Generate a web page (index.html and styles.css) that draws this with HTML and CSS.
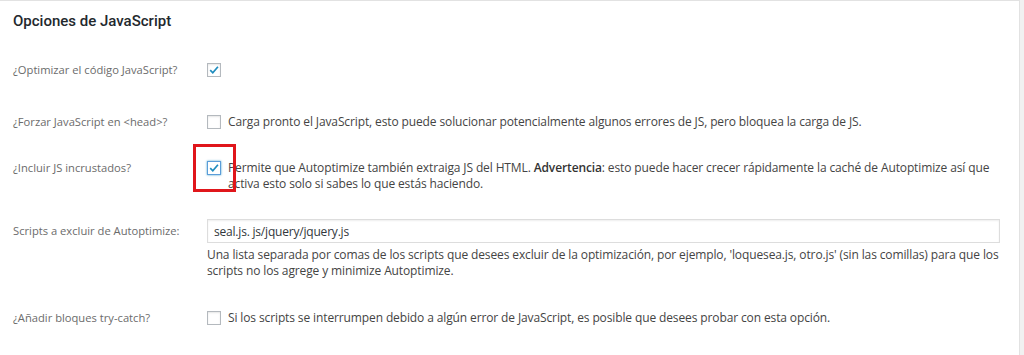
FILE: index.html
```html
<!DOCTYPE html>
<html lang="es">
<head>
    <meta charset="UTF-8">
    <title>Opciones de JavaScript</title>
    <link rel="stylesheet" href="styles.css">
</head>
<body>
    <div class="postbox">
        <h2 class="title">Opciones de JavaScript</h2>

        <div class="row row-optimize">
            <div class="label">¿Optimizar el código JavaScript?</div>
            <div class="field">
                <span class="check checked"><svg viewBox="0 0 14 14"><path d="M2.6 7.2 L5.6 10.2 L11.6 3.2" /></svg></span>
            </div>
        </div>

        <div class="row row-head">
            <div class="label">¿Forzar JavaScript en &lt;head&gt;?</div>
            <div class="field">
                <span class="check"></span>
                <span class="desc">Carga pronto el JavaScript, esto puede solucionar potencialmente algunos errores de JS, pero bloquea la carga de JS.</span>
            </div>
        </div>

        <div class="row row-inline">
            <div class="label">¿Incluir JS incrustados?</div>
            <div class="field">
                <span class="check checked focus"><svg viewBox="0 0 14 14"><path d="M2.6 7.2 L5.6 10.2 L11.6 3.2" /></svg></span>
                <span class="desc">Permite que Autoptimize también extraiga JS del HTML. <strong>Advertencia</strong>: esto puede hacer crecer rápidamente la caché de Autoptimize así que activa esto solo si sabes lo que estás haciendo.</span>
            </div>
            <div class="highlight"></div>
        </div>

        <div class="row row-exclude">
            <div class="label">Scripts a excluir de Autoptimize:</div>
            <div class="field column">
                <input class="text-input" type="text" value="seal.js. js/jquery/jquery.js">
                <span class="desc">Una lista separada por comas de los scripts que desees excluir de la optimización, por ejemplo, 'loquesea.js, otro.js' (sin las comillas) para que los scripts no los agrege y minimize Autoptimize.</span>
            </div>
        </div>

        <div class="row row-trycatch">
            <div class="label">¿Añadir bloques try-catch?</div>
            <div class="field">
                <span class="check"></span>
                <span class="desc">Si los scripts se interrumpen debido a algún error de JavaScript, es posible que desees probar con esta opción.</span>
            </div>
        </div>
    </div>
</body>
</html>
```

FILE: styles.css
```css
html, body {
    margin: 0;
    padding: 0;
    background-color: #f1f1f1;
    height: 355px;
    overflow: hidden;
}
body {
    font-family: "Open Sans", "Noto Sans", sans-serif;
    font-size: 12px;
    line-height: 16px;
    letter-spacing: -0.12px;
    color: #444;
}
.postbox {
    position: relative;
    width: 1020px;
    height: 355px;
    background-color: #fff;
    border-top: 1px solid #e2e2e2;
    border-right: 1px solid #e2e2e2;
    box-sizing: border-box;
}
.title {
    margin: 0;
    padding: 10px 13px 0;
    font-family: Roboto, "Open Sans", sans-serif;
    font-size: 15px;
    line-height: 20px;
    font-weight: 500;
    letter-spacing: 0;
    color: #23282d;
}
.row {
    display: grid;
    grid-template-columns: 194px 1fr;
    padding: 0 13px;
}
.row-optimize { margin-top: 31px; }
.row-head { margin-top: 36px; }
.row-inline { margin-top: 30px; }
.row-exclude { margin-top: 27px; }
.row-trycatch { margin-top: 31px; }
.label {
    font-size: 11.2px;
    letter-spacing: 0;
    color: #6b6b6b;
}
.row-exclude .label {
    padding-top: 4px;
}
.field {
    display: flex;
    align-items: flex-start;
    gap: 7px;
    padding-right: 7px;
}
.field.column {
    flex-direction: column;
    gap: 4px;
}
.check {
    flex: none;
    width: 14px;
    height: 14px;
    margin-top: 1px;
    border: 1px solid #b4b9be;
    background-color: #fff;
    box-shadow: inset 0 1px 2px rgba(0, 0, 0, 0.1);
    box-sizing: border-box;
}
.check svg {
    display: block;
    width: 12px;
    height: 12px;
}
.check path {
    fill: none;
    stroke: #1e8cbe;
    stroke-width: 2;
}
.check.focus {
    border-color: #5b9dd9;
    box-shadow: 0 0 2px rgba(30, 140, 190, 0.8);
}
.desc strong {
    font-weight: 600;
    color: #333;
}
.text-input {
    width: 793px;
    height: 24px;
    margin: 0;
    padding: 0 6px;
    border: 1px solid #ddd;
    box-shadow: inset 0 1px 2px rgba(0, 0, 0, 0.07);
    box-sizing: border-box;
    font-family: inherit;
    font-size: 12px;
    letter-spacing: -0.2px;
    color: #32373c;
    outline: none;
}
.highlight {
    position: absolute;
    left: 193px;
    top: 143px;
    width: 43px;
    height: 48px;
    border: 3px solid #e0161b;
    box-sizing: border-box;
}
```
